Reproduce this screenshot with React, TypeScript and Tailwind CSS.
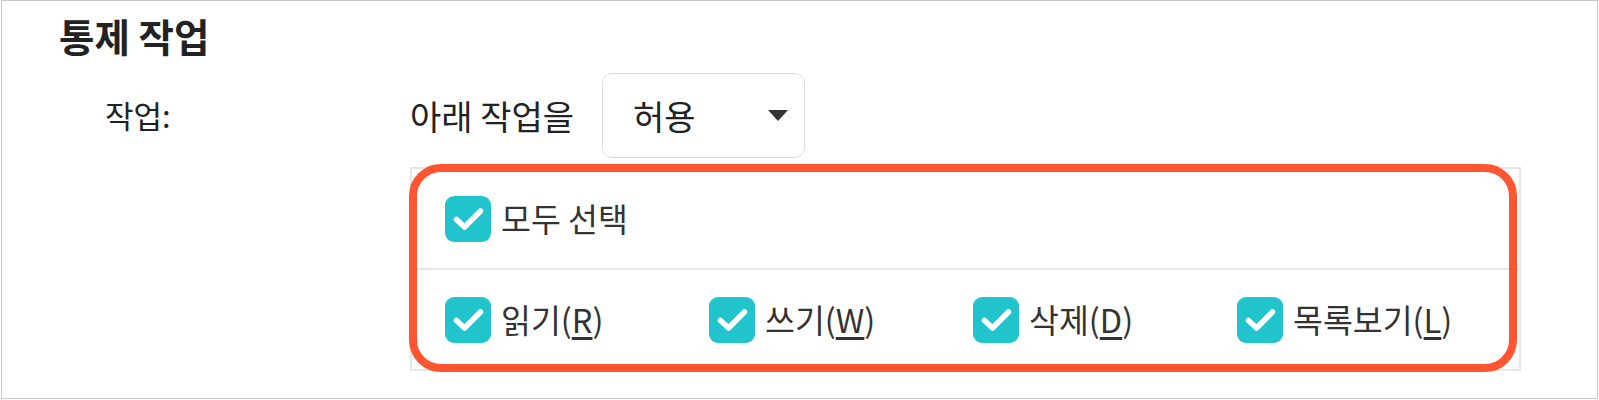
import React from "react";

// One permission option in the lower row
interface Perm {
  label: string;
  key: string;
}

const perms: Perm[] = [
  { label: "읽기", key: "R" },
  { label: "쓰기", key: "W" },
  { label: "삭제", key: "D" },
  { label: "목록보기", key: "L" },
];

function CheckBox() {
  return (
    <span className="flex h-[46px] w-[46px] shrink-0 items-center justify-center rounded-[9px] bg-[#21c4cc]">
      <svg width="46" height="46" viewBox="0 0 46 46" fill="none">
        <polyline
          points="11.5,23.5 19.5,31 35.5,15"
          stroke="white"
          strokeWidth="5.5"
          strokeLinecap="round"
          strokeLinejoin="round"
        />
      </svg>
    </span>
  );
}

export default function App() {
  return (
    <div
      className="ml-[1px] h-[399px] w-[1597px] border border-[#c8c8c8] bg-white pt-[12px] text-[#333]"
      style={{ fontFamily: '"Noto Sans CJK KR", "Noto Sans", sans-serif' }}
    >
      <h2 className="pl-[57px] text-[38.5px] font-bold leading-[44px] text-[#222]">통제 작업</h2>

      <div className="mt-[16px] flex pl-[103px]">
        <div className="flex h-[85px] w-[305px] items-center text-[31px] text-[#222]">작업:</div>

        <div className="flex flex-col">
          <div className="flex h-[85px] items-center">
            <span className="text-[34px] text-[#222]">아래 작업을</span>
            <div className="ml-[28px] flex h-[85px] w-[203px] items-center justify-between rounded-[10px] border border-[#dcdcdc] pl-[30px] pr-[16px]">
              <span className="text-[34px] text-[#222]">허용</span>
              <span className="h-0 w-0 border-x-[10px] border-t-[11px] border-x-transparent border-t-[#333]" />
            </div>
          </div>

          <div className="relative mt-[9px] w-[1111px] border-2 border-[#e6e6e6]">
            <div className="flex h-[99px] items-center gap-[10px] pl-[33px] text-[32.5px]">
              <CheckBox />
              <span>모두 선택</span>
            </div>
            <div className="h-[2px] bg-[#e6e6e6]" />
            <div className="flex h-[99px] items-center pl-[33px] text-[32.5px]">
              {perms.map((p) => (
                <div key={p.key} className="flex w-[264px] items-center gap-[10px]">
                  <CheckBox />
                  <span>
                    {p.label}(<u className="underline-offset-4">{p.key}</u>)
                  </span>
                </div>
              ))}
            </div>

            {/* annotation outline */}
            <div className="pointer-events-none absolute left-[-3px] top-[-5px] h-[208px] w-[1108px] rounded-[32px] border-[8px] border-[#ff5530]" />
          </div>
        </div>
      </div>
    </div>
  );
}
